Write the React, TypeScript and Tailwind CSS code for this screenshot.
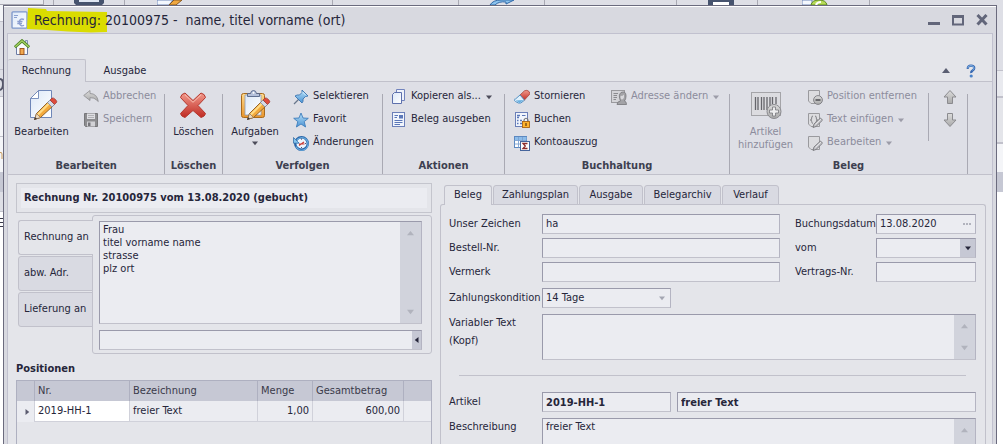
import type { ReactNode } from "react";
import clsx from "clsx";

/* ---------- shared gradients ---------- */
function Gradients() {
  return (
    <svg className="absolute h-0 w-0" aria-hidden="true">
      <defs>
        <linearGradient id="paper" x1="0" y1="0" x2="1" y2="1">
          <stop offset="0" stopColor="#dce8f8" />
          <stop offset="1" stopColor="#ffffff" />
        </linearGradient>
        <linearGradient id="grey" x1="0" y1="0" x2="0" y2="1">
          <stop offset="0" stopColor="#dcdcdc" />
          <stop offset="1" stopColor="#a9a9a9" />
        </linearGradient>
        <linearGradient id="blue" x1="0" y1="0" x2="0" y2="1">
          <stop offset="0" stopColor="#b8e0f8" />
          <stop offset="1" stopColor="#4c94d4" />
        </linearGradient>
        <linearGradient id="red" x1="0" y1="0" x2="0" y2="1">
          <stop offset="0" stopColor="#f29a8c" />
          <stop offset="1" stopColor="#bf2a22" />
        </linearGradient>
        <linearGradient id="orange" x1="0" y1="0" x2="0" y2="1">
          <stop offset="0" stopColor="#ffd98a" />
          <stop offset="1" stopColor="#e8942c" />
        </linearGradient>
      </defs>
    </svg>
  );
}

function Svg({ size = 16, box = 16, children }: { size?: 16 | 32; box?: number; children: ReactNode }) {
  return (
    <svg viewBox={`0 0 ${box} ${box}`} className={clsx("shrink-0", size === 16 ? "size-4" : "size-8")} aria-hidden="true">
      {children}
    </svg>
  );
}

/* ---------- icons ---------- */
const Pencil = () => (
  <g>
    <path d="M8.500 30.500 10.500 24.500 23 12 27.500 16.500 14.500 28.500Z" fill="#f3a93c" stroke="#8a5a20" strokeWidth="0.900" />
    <path d="M10.500 25.500 23.500 12.500 25 14 12 27Z" fill="#ffdb85" />
    <path d="M8.500 30.500 10.500 24.500 14.500 28.500Z" fill="#ecd9bd" stroke="#7a5a3c" strokeWidth="0.600" />
    <path d="M8 31 9.300 28.200 11 29.800Z" fill="#34343c" />
    <path d="M21.500 13.500 24 11 28.500 15.500 26 18Z" fill="#d5dbe6" stroke="#7481a5" strokeWidth="0.700" />
    <path d="M24 11 26 9Q27.500 8.500 29.500 10.500T30.500 13.500L28.500 15.500Z" fill="#de4b3c" stroke="#9a3830" strokeWidth="0.700" />
  </g>
);
const EditBigIcon = () => (
  <Svg size={32} box={32}>
    <path d="M12.500 1.500H25.500V28.500H4.500V9.500Z" fill="url(#paper)" stroke="#6e86b8" />
    <path d="M12.500 1.500V9.500H4.500Z" fill="#fff" stroke="#6e86b8" strokeWidth="0.900" />
    <Pencil />
  </Svg>
);
const TasksBigIcon = () => (
  <Svg size={32} box={32}>
    <rect x="2.500" y="4.500" width="23" height="24" rx="2" fill="url(#orange)" stroke="#a86a1c" />
    <path d="M6 6H22V26H6Z" fill="url(#paper)" stroke="#8e9cb8" strokeWidth="0.800" />
    <path d="M8.500 7.500V4.500H11.500Q12 1.500 14.500 1.500T17.500 4.500H20.500V7.500Z" fill="#b4c0da" stroke="#536488" strokeWidth="0.900" />
    <circle cx="14.500" cy="3.800" r="1" fill="#fff" />
    <Pencil />
  </Svg>
);
const DeleteBigIcon = () => (
  <Svg size={32} box={32}>
    <path d="M8 4 16 11.500 24 4Q28 5 28.500 8.500L21 16.500 28.500 24.500Q28 27.500 24 28.500L16 21.500 8 28.500Q4 27.500 3.500 24.500L11 16.500 3.500 8.500Q4 5 8 4Z" fill="url(#red)" stroke="#b4382e" strokeLinejoin="round" />
    <path d="M8 5.800 16 13.300 24 5.800" fill="none" stroke="#f9bfb2" />
  </Svg>
);
const BarcodeBigIcon = () => (
  <Svg size={32} box={32}>
    <rect x="1.500" y="3.500" width="29" height="23" fill="#dcdce0" stroke="#a4a4a8" />
    <path d="M5.500 8V21M8 8V21M11.500 8V21M14 8V21M17 8V21M20 8V17M22.500 8V15M26 8V15" stroke="#66666c" strokeWidth="1.300" />
    <circle cx="24" cy="22.500" r="7" fill="url(#grey)" stroke="#8b8b90" />
    <path d="M22.500 18H25.500V21H28.500V24H25.500V27H22.500V24H19.500V21H22.500Z" fill="#ededee" stroke="#77777c" strokeWidth="0.800" />
  </Svg>
);
const UndoIcon = () => (
  <Svg><path d="M.700 6.500 7 1.500V4.500Q14 4.500 15.300 12.500L13.500 11Q11.500 8.500 7 8.700V11.500Z" fill="url(#grey)" stroke="#8d8d90" strokeWidth="0.800" /></Svg>
);
const SaveIcon = () => (
  <Svg>
    <path d="M1.500 1.500H14.500V14.500H2.500L1.500 13.500Z" fill="#8d8d90" stroke="#77777a" />
    <path d="M4 1.500H12V7H4Z" fill="#dedee2" />
    <path d="M5 3.500H11M5 5.500H11" stroke="#b2b2b6" />
    <path d="M4 9.500H12V14.500H4Z" fill="#d2d2d6" />
    <path d="M5 10.500H7.500V14H5Z" fill="#75757a" />
  </Svg>
);
const PinIcon = () => (
  <Svg>
    <path d="M1 15 6 10" stroke="#68778c" strokeWidth="1.200" />
    <path d="M9 1 15 7 12.500 7.500 10 10Q10.500 12.500 9 14L2 7Q4 5.500 6.500 6L9 3.500Z" fill="url(#blue)" stroke="#3a74b0" strokeWidth="0.900" strokeLinejoin="round" />
    <path d="M9.500 3 13 6.500" stroke="#d8f0ff" strokeWidth="0.900" />
  </Svg>
);
const StarIcon = () => (
  <Svg><path d="M8 1 10 6 15.300 6.300 11.200 9.600 12.600 15 8 12 3.400 15 4.800 9.600 .700 6.300 6 6Z" fill="url(#blue)" stroke="#3e7ebc" strokeWidth="0.900" strokeLinejoin="round" /></Svg>
);
const HistoryIcon = () => (
  <Svg>
    <circle cx="8.500" cy="8.500" r="6.300" fill="#edf5fd" stroke="#2864a8" strokeWidth="2.400" />
    <path d="M3.300 5.800A6.300 6.300 0 1 1 3 11.500" fill="none" stroke="#66aade" strokeWidth="1.200" />
    <path d="M.500 2.500V8.200H6.200L4.300 6.300 2.500 4.500Z" fill="#82c4ee" stroke="#28629e" strokeWidth="0.700" />
    <path d="M6 10.500 11 7M6 9 11.500 9" stroke="#cc3e36" strokeWidth="1.200" />
    <path d="M8.500 3.500V4.700M13 8.500H12M8.500 13V12" stroke="#446" strokeWidth="0.900" />
  </Svg>
);
const CopyIcon = () => (
  <Svg>
    <path d="M5.500.500H13.500V11.500H5.500Z" fill="#eef2fb" stroke="#7183bd" />
    <path d="M3.500 3.500H10.500V14.500H1.500V5.500Z" fill="url(#paper)" stroke="#5e70ac" />
  </Svg>
);
const ReportIcon = () => (
  <Svg>
    <rect x="1.500" y=".500" width="12" height="14" fill="#f1f5fc" stroke="#6b7fb8" />
    <path d="M3.500 3.500H7M3.500 5.500H6M3.500 8.500H11.500M3.500 10.500H11.500M3.500 12.500H9" stroke="#5b77b8" />
    <rect x="8" y="3" width="4" height="3.500" fill="#5b77b8" />
  </Svg>
);
const EraserIcon = () => (
  <Svg>
    <path d="M6 6 10.500 1.800Q13 .500 15 2.500T15 6L10 11.500Z" fill="url(#red)" stroke="#a8443c" strokeWidth="0.800" />
    <path d="M6 6 10.500 11.200 6.800 14Q4.500 14.800 1.500 12.500T1.500 10Z" fill="#e0f0fb" stroke="#4588be" strokeWidth="0.900" />
    <path d="M1.500 11.500Q4 12.500 5.500 14.200L9.500 11Z" fill="#6ab0e0" />
  </Svg>
);
const BookIcon = () => (
  <Svg>
    <rect x="1.500" y=".500" width="12" height="14" fill="#f1f5fc" stroke="#6b7fb8" />
    <path d="M3 3.500H6M3 5.500H5M3 8.500H4.500M6 8.500H8M3 11.500H4.500M6 11.500H8" stroke="#5b77b8" strokeWidth="1.400" />
    <path d="M8 3.500H11.500" stroke="#5b77b8" />
    <path d="M10 10V8Q12 4.500 14 8V10" fill="none" stroke="#777" strokeWidth="1.200" />
    <rect x="8.500" y="9.500" width="7" height="6" fill="#ffb32e" stroke="#a86414" strokeWidth="0.900" />
    <path d="M12 11V14" stroke="#5e3a12" strokeWidth="1.200" />
  </Svg>
);
const StatementIcon = () => (
  <Svg>
    <rect x=".500" y="1.500" width="12" height="11" fill="#fff" stroke="#5c88c0" />
    <rect x="1" y="2" width="11.500" height="3" fill="#8cbcea" />
    <path d="M.500 5.500H12.500M.500 9H12.500M4.500 2V12.500M8.500 2V12.500" stroke="#7aa0d0" strokeWidth="0.900" />
    <rect x="6.500" y="6.500" width="9" height="9" fill="#fff" stroke="#46659c" />
    <path d="M13.500 8.500H9L11.300 11 9 13.500H13.500" fill="none" stroke="#8c2c2c" strokeWidth="1.300" />
  </Svg>
);
const AddressIcon = () => (
  <Svg>
    <rect x=".500" y="1.500" width="13" height="12" fill="#d4d4d8" stroke="#9a9a9e" />
    <path d="M2.500 4.500H7M2.500 6.500H6M2.500 8.500H6M2.500 10.500H5" stroke="#8b8b8f" />
    <path d="M6 15.500Q6 12.500 9.500 12Q7 6 10 3.500Q15 1.500 15 7Q15 10 13.500 12Q15.500 12.500 15.500 15.500Z" fill="#a3a3a7" stroke="#7e7e82" strokeWidth="0.900" />
    <path d="M9.500 7Q12 7 13 5.500V8.500Q12 11 10.500 10.500Q9 9 9.500 7Z" fill="#d8d8dc" />
  </Svg>
);
const GreyDoc = () => <path d="M1.500 1.500H12.500V14.500H4L1.500 12Z" fill="#dcdcdf" stroke="#9a9a9e" />;
const GreyPencil = () => (
  <>
    <path d="M6 15.500 7 12 13.500 6 15.500 8.200 9 14.500Z" fill="#c4c4c8" stroke="#77777c" strokeWidth="0.900" />
    <path d="M8.500 12.500 14 7" stroke="#ececee" strokeWidth="0.800" />
  </>
);
const RemoveIcon = () => (
  <Svg>
    <GreyDoc />
    <circle cx="11" cy="11" r="4.400" fill="url(#grey)" stroke="#838388" />
    <path d="M8.500 11H13.500" stroke="#55555a" strokeWidth="1.600" />
  </Svg>
);
const InsertTextIcon = () => (
  <Svg>
    <GreyDoc />
    <path d="M6 4Q4.500 4 4.700 6T3.300 8Q4.900 8 4.700 9.500T6 11.500M8 4Q9.500 4 9.300 6T10.700 8Q9.100 8 9.300 9.500T8 11.500" fill="none" stroke="#77777c" strokeWidth="0.900" />
    <GreyPencil />
  </Svg>
);
const EditSmallIcon = () => <Svg><GreyDoc /><GreyPencil /></Svg>;
const ArrowUpIcon = () => (
  <Svg><path d="M8 1.500 14 8H10.500V14.500H5.500V8H2Z" fill="url(#grey)" stroke="#8b8b8f" strokeLinejoin="round" /></Svg>
);
const ArrowDownIcon = () => (
  <Svg><path d="M8 14.500 14 8H10.500V1.500H5.500V8H2Z" fill="url(#grey)" stroke="#8b8b8f" strokeLinejoin="round" /></Svg>
);
const HomeIcon = () => (
  <Svg>
    <path d="M2.500 7V15.500H13.500V7L8 2.500Z" fill="#f8fafd" stroke="#6c7ca6" />
    <path d="M11.500 1.500H13.500V5H11.500Z" fill="#d8e0ee" stroke="#6c7ca6" strokeWidth="0.800" />
    <path d="M.800 8.200 8 1.800 15.200 8.200" fill="none" stroke="#4f8426" strokeWidth="3" />
    <path d="M1.300 7.700 8 1.800 14.700 7.700" fill="none" stroke="#a8d666" strokeWidth="1.300" />
    <rect x="6" y="9.500" width="4" height="6" fill="#f0a850" stroke="#984e14" strokeWidth="0.900" />
  </Svg>
);
const InvoiceIcon = () => (
  <svg viewBox="0 0 17 18" className="h-[18px] w-[17px] shrink-0" aria-hidden="true">
    <rect x="1" y=".800" width="15" height="16.400" rx="1" fill="url(#paper)" stroke="#7c96ca" strokeWidth="1.300" />
    <path d="M3 4.500H7M3 6.500H6" stroke="#8ba0d0" strokeWidth="1.200" />
    <path d="M13 8.500Q9.500 7 8.500 10Q7.800 13.500 10.500 14.800Q12 15 13 14.300M6.300 10.500H11.500M6.300 12.500H11" fill="none" stroke="#8b9ed0" strokeWidth="1.400" />
  </svg>
);
const HelpIcon = () => (
  <svg viewBox="0 0 10 14" className="h-[14px] w-[10px]" aria-hidden="true">
    <path d="M1.800 4.800Q1.500 1.700 5 1.700T8.200 4.200Q8.200 5.500 6.600 6.400T5.200 9" fill="none" stroke="#3566b0" strokeWidth="2.300" />
    <path d="M1.800 4Q2 1.600 5 1.600T8 4.200Q8 5.400 6.500 6.300" fill="none" stroke="#8cbcec" strokeWidth="0.900" />
    <circle cx="5.200" cy="12" r="1.600" fill="#4a82c8" />
  </svg>
);

type Dir = "up" | "down" | "left" | "right";
const arrowPath: Record<Dir, string> = {
  up: "M0 6 4 1 8 6Z",
  down: "M0 2H8L4 7Z",
  left: "M6 0V8L1 4Z",
  right: "M2 0V8L7 4Z",
};
function Triangle({ dir, className }: { dir: Dir; className: string }) {
  return (
    <svg viewBox="0 0 8 8" className={clsx("shrink-0 fill-current", className)} aria-hidden="true">
      <path d={arrowPath[dir]} />
    </svg>
  );
}

/* ---------- ribbon ---------- */
function SmallButton({ icon, label, disabled, menu }: { icon: ReactNode; label: string; disabled?: boolean; menu?: boolean }) {
  return (
    <button disabled={disabled} className={clsx("flex h-[23px] items-center gap-1 whitespace-nowrap", disabled && "text-[#8c8c9c]")}>
      {icon}
      <span>{label}</span>
      {menu && <Triangle dir="down" className={clsx("ml-px size-[6px]", disabled ? "text-[#9c9ca8]" : "text-[#4c4c5a]")} />}
    </button>
  );
}
function BigButton({ icon, label, disabled, menu }: { icon: ReactNode; label: string; disabled?: boolean; menu?: boolean }) {
  return (
    <button disabled={disabled} className={clsx("flex flex-col items-center leading-[13px]", disabled && "text-[#8c8c9c]")}>
      {icon}
      <span className="mt-1 whitespace-pre-line">{label}</span>
      {menu && <Triangle dir="down" className="mt-[2px] size-[6px] text-[#4c4c5a]" />}
    </button>
  );
}
function Group({ title, width, children }: { title: string; width: string; children: ReactNode }) {
  return (
    <section className={clsx("flex shrink-0", width)}>
      <div className="flex flex-1 flex-col">
        <div className="flex h-[78px] px-2 pt-1">{children}</div>
        <h2 className="text-center leading-[13px] font-bold text-[#3d3f50]">{title}</h2>
      </div>
      <div className="mt-[13px] w-px bg-[#a9a9b3]" />
    </section>
  );
}

function Ribbon() {
  return (
    <div className="flex h-[94px] shrink-0 overflow-hidden border-b border-[#c1c1cb] bg-[#dedfe6]">
      <Group title="Bearbeiten" width="w-[157px]">
        <div className="flex w-[51px] justify-center pt-1"><BigButton icon={<EditBigIcon />} label="Bearbeiten" /></div>
        <div className="ml-4">
          <SmallButton icon={<UndoIcon />} label="Abbrechen" disabled />
          <SmallButton icon={<SaveIcon />} label="Speichern" disabled />
        </div>
      </Group>
      <Group title="Löschen" width="w-[58px]">
        <div className="flex flex-1 justify-center pt-1"><BigButton icon={<DeleteBigIcon />} label="Löschen" /></div>
      </Group>
      <Group title="Verfolgen" width="w-[160px]">
        <div className="flex w-[48px] justify-center pt-1"><BigButton icon={<TasksBigIcon />} label="Aufgaben" menu /></div>
        <div className="ml-[14px]">
          <SmallButton icon={<PinIcon />} label="Selektieren" />
          <SmallButton icon={<StarIcon />} label="Favorit" />
          <SmallButton icon={<HistoryIcon />} label="Änderungen" />
        </div>
      </Group>
      <Group title="Aktionen" width="w-[122px]">
        <div>
          <SmallButton icon={<CopyIcon />} label="Kopieren als..." menu />
          <SmallButton icon={<ReportIcon />} label="Beleg ausgeben" />
        </div>
      </Group>
      <Group title="Buchhaltung" width="w-[225px]">
        <div className="w-[98px] pl-px">
          <SmallButton icon={<EraserIcon />} label="Stornieren" />
          <SmallButton icon={<BookIcon />} label="Buchen" />
          <SmallButton icon={<StatementIcon />} label="Kontoauszug" />
        </div>
        <SmallButton icon={<AddressIcon />} label="Adresse ändern" disabled menu />
      </Group>
      <Group title="Beleg" width="w-[238px]">
        <div className="flex w-[55px] justify-center pt-1"><BigButton icon={<BarcodeBigIcon />} label={"Artikel\nhinzufügen"} disabled /></div>
        <div className="ml-[14px] w-[121px]">
          <SmallButton icon={<RemoveIcon />} label="Position entfernen" disabled />
          <SmallButton icon={<InsertTextIcon />} label="Text einfügen" disabled menu />
          <SmallButton icon={<EditSmallIcon />} label="Bearbeiten" disabled menu />
        </div>
        <div className="mt-2 h-12 w-px bg-[#a9a9b3]" />
        <div className="ml-[13px] flex flex-col">
          <button disabled aria-label="Nach oben" className="flex h-[23px] items-center"><ArrowUpIcon /></button>
          <button disabled aria-label="Nach unten" className="flex h-[23px] items-center"><ArrowDownIcon /></button>
        </div>
      </Group>
    </div>
  );
}

/* ---------- form parts ---------- */
const sunken = "border border-t-[#9a9aab] border-l-[#9a9aab] border-r-[#b4b4c2] border-b-[#c1c1cb] bg-[#ebecf1]";

function ScrollColumn() {
  return (
    <div className="flex w-[21px] shrink-0 flex-col items-center justify-between bg-[#d1d3dc] py-2 text-[#b1b3bd]" aria-hidden="true">
      <Triangle dir="up" className="size-[7px]" />
      <Triangle dir="down" className="size-[7px]" />
    </div>
  );
}
function TextBox({ id, value, bold }: { id: string; value?: string; bold?: boolean }) {
  return <input id={id} defaultValue={value} className={clsx("h-5 w-full min-w-0 px-[3px] outline-none", sunken, bold && "font-bold")} />;
}
function TextArea({ id, label, value, className }: { id: string; label?: string; value?: string; className: string }) {
  return (
    <div className={clsx("flex", sunken, className)}>
      <textarea id={id} aria-label={label} defaultValue={value} className="min-w-0 flex-1 resize-none overflow-hidden px-[3px] pt-px leading-[13px] outline-none" />
      <ScrollColumn />
    </div>
  );
}

function LeftColumn() {
  const th = "border-r border-[#aeb0c0] px-[3px] font-normal text-left";
  const td = "border-r border-b border-[#d0d1da] px-[3px]";
  return (
    <div className="flex w-[416px] shrink-0 flex-col pt-2">
      <div className="border border-[#c4c5cd] p-1">
        <h1 className="h-5 bg-[#ebecf1] px-[3px] leading-5 font-bold">Rechnung Nr. 20100975 vom 13.08.2020 (gebucht)</h1>
      </div>
      <div className="mt-[2px] flex">
        <div role="tablist" className="z-10 -mr-px ml-[2px] flex w-[75px] flex-col gap-px pt-[5px]">
          <button role="tab" aria-selected="true" className="h-[35px] rounded-l-[3px] border border-r-0 border-[#c1c1cb] bg-[#e4e5ea] pl-[5px] text-left">Rechnung an</button>
          <button role="tab" aria-selected="false" className="h-[35px] rounded-l-[3px] border border-[#c1c1cb] bg-[#d9dae2] pl-[5px] text-left">abw. Adr.</button>
          <button role="tab" aria-selected="false" className="h-[35px] rounded-l-[3px] border border-[#c1c1cb] bg-[#d9dae2] pl-[5px] text-left">Lieferung an</button>
        </div>
        <div className="flex flex-1 flex-col gap-[6px] rounded-[3px] border border-[#c1c1cb] pt-[5px] pr-[9px] pb-[3px] pl-[6px]">
          <TextArea id="adresse" label="Rechnungsadresse" value={"Frau\ntitel vorname name\nstrasse\nplz ort"} className="h-[103px]" />
          <div className={clsx("flex h-5", sunken)}>
            <input aria-label="Adresszusatz" className="min-w-0 flex-1 px-[3px] outline-none" />
            <button aria-label="Auswahl" className="flex w-[9px] items-center justify-center bg-[#c6c8d4]"><Triangle dir="left" className="size-[6px]" /></button>
          </div>
        </div>
      </div>
      <h2 className="mt-2 h-[17px] leading-[13px] font-bold">Positionen</h2>
      <div className="mt-px flex-1 border border-b-0 border-[#aeb0c0]">
        <table className="w-full table-fixed border-separate border-spacing-0" aria-label="Positionen">
          <colgroup>
            <col className="w-[18px]" /><col className="w-[95px]" /><col className="w-[128px]" /><col className="w-[55px]" /><col className="w-[91px]" /><col />
          </colgroup>
          <thead>
            <tr className="h-5 bg-[#c6c8d4] text-[#3a3a4a]">
              <th className={th} aria-label="Markierung" />
              <th className={th}>Nr.</th>
              <th className={th}>Bezeichnung</th>
              <th className={th}>Menge</th>
              <th className={th}>Gesamtbetrag</th>
              <th className="font-normal" />
            </tr>
          </thead>
          <tbody>
            <tr className="h-[21px] bg-[#ebecf1]">
              <td className="border-r border-[#d0d1da] pl-[7px]"><Triangle dir="right" className="size-[6px] text-[#5c5c70]" /></td>
              <td className={clsx(td, "bg-white")}>2019-HH-1</td>
              <td className={td}>freier Text</td>
              <td className={clsx(td, "text-right")}>1,00</td>
              <td className={clsx(td, "text-right")}>600,00</td>
              <td className="border-b border-[#d0d1da]" />
            </tr>
          </tbody>
        </table>
      </div>
    </div>
  );
}

const detailTabs = [
  { label: "Beleg", width: "w-[48px]" },
  { label: "Zahlungsplan", width: "w-[85px]" },
  { label: "Ausgabe", width: "w-[64px]" },
  { label: "Belegarchiv", width: "w-[77px]" },
  { label: "Verlauf", width: "w-[57px]" },
];

function RightColumn() {
  return (
    <div className="flex min-w-0 flex-1 flex-col pt-[10px]">
      <div role="tablist" className="z-10 -mb-px flex gap-px pl-1">
        {detailTabs.map((t, i) => (
          <button
            key={t.label}
            role="tab"
            aria-selected={i === 0}
            className={clsx("h-5 rounded-t-[3px] border border-[#c1c1cb] text-center", t.width, i === 0 ? "border-b-0 bg-[#e4e5ea]" : "bg-[#d9dae2]")}
          >
            {t.label}
          </button>
        ))}
      </div>
      <div className="flex flex-1 flex-col rounded-t-[3px] border border-b-0 border-[#c1c1cb] pt-[9px] pr-[9px] pl-2">
        <div className="grid grid-cols-[93px_1fr_96px_100px] gap-y-1 leading-5">
          <label htmlFor="zeichen">Unser Zeichen</label>
          <TextBox id="zeichen" value="ha" />
          <label htmlFor="datum" className="pl-[15px]">Buchungsdatum</label>
          <div className={clsx("flex h-5", sunken)}>
            <input id="datum" defaultValue="13.08.2020" className="min-w-0 flex-1 px-[3px] outline-none" />
            <button aria-label="Datum wählen" className="flex w-3 items-center gap-px text-[#b1b3bd]">
              <span className="h-[2px] w-[2px] bg-current" /><span className="h-[2px] w-[2px] bg-current" /><span className="h-[2px] w-[2px] bg-current" />
            </button>
          </div>
          <label htmlFor="bestell">Bestell-Nr.</label>
          <TextBox id="bestell" />
          <label htmlFor="vom" className="pl-[15px]">vom</label>
          <div className={clsx("relative flex h-5", sunken)}>
            <select id="vom" className="min-w-0 flex-1 appearance-none px-[3px] outline-none"><option value="" /></select>
            <span className="pointer-events-none absolute inset-y-0 right-0 flex w-[15px] items-center justify-center bg-[#c6c8d4]"><Triangle dir="down" className="size-[6px]" /></span>
          </div>
          <label htmlFor="vermerk">Vermerk</label>
          <TextBox id="vermerk" />
          <label htmlFor="vertrag" className="pl-[15px]">Vertrags-Nr.</label>
          <TextBox id="vertrag" />
        </div>
        <div className="mt-[6px] grid grid-cols-[93px_129px_1fr] gap-y-[6px]">
          <label htmlFor="kondition" className="leading-5">Zahlungskondition</label>
          <div className={clsx("relative flex h-5", sunken)}>
            <select id="kondition" className="min-w-0 flex-1 appearance-none px-[3px] outline-none"><option>14 Tage</option></select>
            <Triangle dir="down" className="pointer-events-none absolute top-[6px] right-[5px] size-[6px] text-[#a4a6b2]" />
          </div>
          <span />
          <label htmlFor="kopf" className="leading-[18px]">Variabler Text<br />(Kopf)</label>
          <TextArea id="kopf" className="col-span-2 h-[46px]" />
        </div>
        <hr className="mx-[10px] mt-[15px] border-[#c1c1cb]" />
        <div className="mt-4 grid grid-cols-[93px_129px_1fr] gap-y-[6px]">
          <label htmlFor="artikel" className="leading-5">Artikel</label>
          <TextBox id="artikel" value="2019-HH-1" bold />
          <div className="pl-[6px]"><input aria-label="Artikelname" defaultValue="freier Text" className={clsx("h-5 w-full px-[3px] font-bold outline-none", sunken)} /></div>
          <label htmlFor="beschreibung" className="leading-[18px]">Beschreibung</label>
          <TextArea id="beschreibung" value="freier Text" className="col-span-2 h-[60px]" />
        </div>
      </div>
    </div>
  );
}

/* ---------- window behind ---------- */
function BackgroundStrip() {
  return (
    <div className="flex h-[5px] shrink-0 overflow-hidden bg-[#dedfe6]" aria-hidden="true">
      <div className="w-[44px] border-r border-b border-[#a9a9b3] bg-[#e9eaef]" />
      <div className="w-[10px] border-r border-[#a9a9b3]" />
      <div className="flex w-[71px] justify-center border-r border-[#a9a9b3]">
        <svg viewBox="0 0 30 5" className="h-[5px] w-[30px]"><path d="M0 0H30V3L28 5H2L0 3Z" fill="#46536e" /><path d="M5 0H25V2H5Z" fill="#dfe6f2" /></svg>
      </div>
      <div className="w-[208px] border-r border-[#a9a9b3] pl-8">
        <svg viewBox="0 0 26 5" className="h-[5px] w-[26px]"><path d="M0 0H16L12 5H0Z" fill="#f4f8fe" stroke="#6e86b8" /><path d="M17 0H25L19 5H12Z" fill="#f0a840" stroke="#8a5a20" /></svg>
      </div>
      <div className="w-[126px] border-r border-[#a9a9b3]" />
      <div className="w-[86px] border-r border-[#a9a9b3] pl-[30px]">
        <svg viewBox="0 0 26 5" className="h-[5px] w-[26px]"><path d="M1 5Q4 0 12 0H25L17 4V2Q10 1 6 5Z" fill="#8cc4ee" stroke="#2f68a8" /></svg>
      </div>
      <div className="w-[132px] border-r border-[#a9a9b3]" />
      <div className="w-[81px] border-r border-[#a9a9b3] pl-[31px]">
        <svg viewBox="0 0 26 5" className="h-[5px] w-[26px]"><path d="M0 0H26V5H0Z" fill="#46536e" /><path d="M5 2H21V5H5Z" fill="#fff" /></svg>
      </div>
      <div className="w-[112px] border-r border-[#a9a9b3] pl-[44px]">
        <svg viewBox="0 0 26 5" className="h-[5px] w-[26px]"><path d="M0 0V5H10V0Z" fill="#f4f8fe" stroke="#6e86b8" /><path d="M9 5Q10 0 17 0T25 5Z" fill="#b8dc58" stroke="#5c8a20" /><path d="M14 5Q15 2 19 2" fill="none" stroke="#fff" strokeWidth="2" /></svg>
      </div>
    </div>
  );
}

export default function App() {
  return (
    <div className="flex h-screen flex-col overflow-hidden bg-[#dedfe6] font-['DejaVu_Sans_Condensed','DejaVu_Sans',sans-serif] text-[11px] text-[#26263a]">
      <Gradients />
      <BackgroundStrip />
      <div className="flex min-h-0 flex-1">
        <div className="flex w-[3px] shrink-0 flex-col" aria-hidden="true">
          <div className="h-[17px] border-b border-[#c1c1cb] bg-[#f4f5f8]" />
          <div className="h-[48px] border-b border-[#c1c1cb]" />
          <div className="h-[27px] border-b border-[#c1c1cb] pt-2">
            <svg viewBox="0 0 3 13" className="h-[13px] w-[3px]"><path d="M0 1Q3 1 3 6T0 12" fill="none" stroke="#55576a" strokeWidth="2" /></svg>
          </div>
          <div className="h-[40px] border-b border-[#c1c1cb] bg-[#f4f5f8]" />
          <div className="h-[35px] bg-[#f4f5f8] pt-[14px]">
            <svg viewBox="0 0 3 8" className="h-2 w-[3px]"><path d="M0 1.500Q2 1 2 3V8" fill="none" stroke="#c89a5a" /></svg>
          </div>
          <div className="h-[20px] bg-[#c6c8d4]" />
          <div className="h-[20px] border-b border-[#c1c1cb]" />
          <div className="flex-1 bg-white pt-[6px]">
            <svg viewBox="0 0 3 9" className="h-[9px] w-[3px]"><path d="M0 .500H3M0 4.500H3M0 8.500H3" stroke="#3a3a4a" /></svg>
          </div>
        </div>

        <div className="flex min-w-0 flex-1 flex-col border border-b-0 border-[#6b6b7e] bg-[#d8d9e0]">
          <header className="relative flex h-[27px] shrink-0 items-center border-t border-white pr-2 pl-[7px]">
            <InvoiceIcon />
            <svg viewBox="0 0 81 25" className="absolute top-px left-[23px] h-[25px] w-[81px]" aria-hidden="true">
              <path d="M1 0 19 1 20 3 80 4 80 24 64 24.500 41 23.500 20 22 0 21Z" fill="#dadc00" />
            </svg>
            <div className="relative ml-[6px] flex-1 text-[14px] whitespace-pre">Rechnung: 20100975 -  name, titel vorname (ort)</div>
            <div className="flex items-center gap-3 text-[#62667a]">
              <button aria-label="Minimieren"><svg viewBox="0 0 12 12" className="size-3"><path d="M0 8H12V11H0Z" fill="currentColor" /></svg></button>
              <button aria-label="Maximieren"><svg viewBox="0 0 12 12" className="size-3"><path d="M1 2H11V10.500H1Z" fill="none" stroke="currentColor" strokeWidth="2" /><path d="M0 1H12V4H0Z" fill="currentColor" /></svg></button>
              <button aria-label="Schließen"><svg viewBox="0 0 12 12" className="size-3"><path d="M1.500 1 10.500 10.500M10.500 1 1.500 10.500" stroke="currentColor" strokeWidth="3" /></svg></button>
            </div>
          </header>

          <main className="mx-[3px] flex min-h-0 flex-1 flex-col border border-b-0 border-[#c1c1cf] bg-[#e4e5ea]">
            <div className="flex h-[25px] shrink-0 items-center pl-[6px]">
              <button aria-label="Startseite"><HomeIcon /></button>
            </div>
            <nav className="z-10 -mb-px flex h-[23px] shrink-0">
              <button className="w-[78px] rounded-t-[2px] border border-b-0 border-l-0 border-[#c1c1cb] bg-[#dedfe6] pt-px">Rechnung</button>
              <div className="flex flex-1 items-center border-b border-[#c1c1cb] pt-[2px]">
                <button className="w-[78px] text-center">Ausgabe</button>
                <div className="ml-auto flex items-center gap-4 pr-4">
                  <button aria-label="Menüband einklappen"><Triangle dir="up" className="size-2 text-[#5a5e72]" /></button>
                  <button aria-label="Hilfe"><HelpIcon /></button>
                </div>
              </div>
            </nav>
            <Ribbon />
            <div className="flex min-h-0 flex-1 gap-2 pr-[6px] pl-2">
              <LeftColumn />
              <RightColumn />
            </div>
          </main>
        </div>

        <div className="flex w-[6px] shrink-0 flex-col" aria-hidden="true">
          <div className="h-[66px] border-b border-[#c1c1cb]" />
          <div className="h-[27px] border-b-2 border-[#c1c1cb] bg-[#e9eaef]" />
          <div className="h-[46px] border-b-2 border-[#c1c1cb] bg-[#e4e5ea]" />
          <div className="h-[28px] bg-[#f4f5f8]" />
          <div className="h-5 bg-[#c6c8d4]" />
          <div className="flex-1 bg-white" />
        </div>
      </div>
    </div>
  );
}
